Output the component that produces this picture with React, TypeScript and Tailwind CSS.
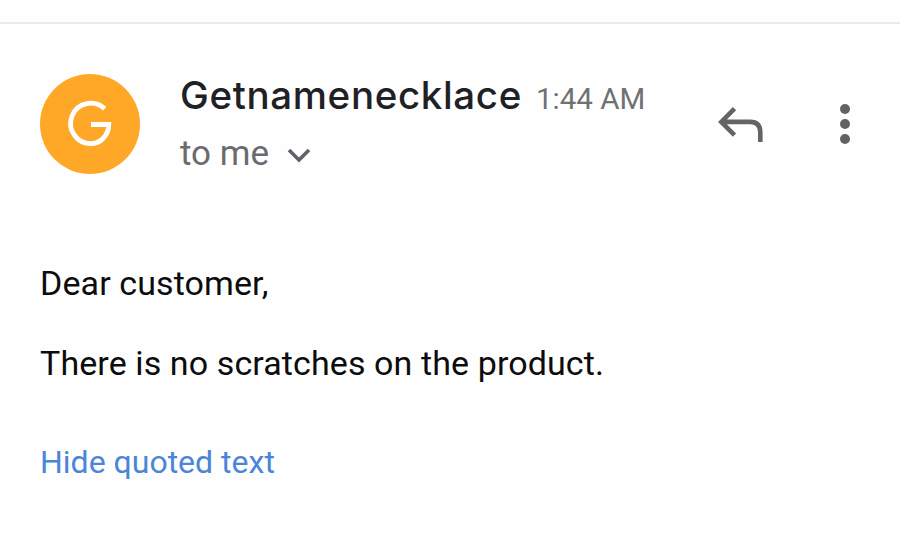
function Avatar() {
  return (
    <div className="h-[100px] w-[100px] shrink-0 rounded-full bg-[#ffa726]">
      <svg viewBox="0 0 100 100" className="h-full w-full" fill="none" stroke="#fff" strokeWidth="4.8">
        <path d="M64.7 34.7 A20.2 20.2 0 1 0 51 69.6 A17.8 19.1 0 0 0 68.8 50.5 H51" />
      </svg>
    </div>
  );
}

export default function App() {
  return (
    <main className="h-[540px] w-[900px] overflow-hidden bg-[#fefefe] font-[Roboto,sans-serif]">
      <div className="h-6 border-b-2 border-[#ebebeb]" />
      <header className="flex h-[150px] items-start pt-[50px] pl-10">
        <Avatar />
        <div className="ml-10 w-[530px]">
          <div className="flex h-[42px] items-baseline whitespace-nowrap">
            <h1 className="w-[342px] font-[Inter,sans-serif] text-[38.5px] leading-[42px] font-medium tracking-[0.65px] text-[#202124]">
              Getnamenecklace
            </h1>
            <span className="ml-3.5 text-[29.5px] leading-9 text-[#6f7173]">1:44 AM</span>
          </div>
          <button className="mt-3.5 flex h-12 items-center text-[35px] leading-[48px] text-[#696b6d]">
            to me
            <svg viewBox="0 0 24 16" className="ml-4.5 mt-0.5 h-4 w-6" fill="none" stroke="#5f6368" strokeWidth="3.6">
              <path d="M2 3 L12 13 L22 3" />
            </svg>
          </button>
        </div>
        <button aria-label="Reply" className="mt-[30px] ml-2">
          <svg viewBox="0 0 46 40" className="h-10 w-[46px]" fill="none" stroke="#626466" strokeWidth="4.6">
            <path d="M16.5 4.7 L3.3 17.9 L16.5 31.1 M4 17.9 H32 Q42.3 17.9 42.3 28.5 V38" />
          </svg>
        </button>
        <button aria-label="More options" className="mt-[30px] ml-[75px]">
          <svg viewBox="0 0 12 40" className="h-10 w-3" fill="#606264">
            <circle cx="6" cy="5" r="5" />
            <circle cx="6" cy="20" r="5" />
            <circle cx="6" cy="35" r="5" />
          </svg>
        </button>
      </header>
      <section className="pl-10 text-[34px] leading-10 tracking-[0.1px] text-[#0c0c0c]">
        <p className="mt-[89px]">Dear customer,</p>
        <p className="mt-10">There is no scratches on the product.</p>
        <a className="mt-[59px] block text-[32px] tracking-normal text-[#4a86d8]">Hide quoted text</a>
      </section>
    </main>
  );
}
